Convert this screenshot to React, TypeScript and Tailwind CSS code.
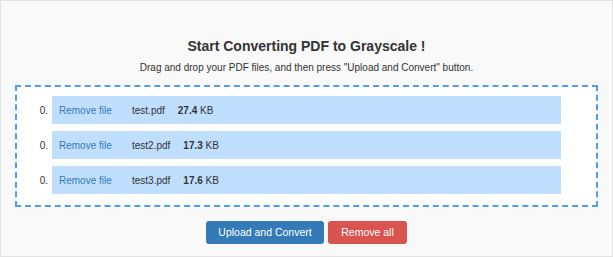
const files = [
  { name: "test.pdf", size: "27.4" },
  { name: "test2.pdf", size: "17.3" },
  { name: "test3.pdf", size: "17.6" },
];

export default function App() {
  return (
    <div
      className="w-[613px] h-[257px] bg-[#f9f9f9] border border-[#e3e3e3] text-[#333] flex flex-col items-center"
      style={{ fontFamily: '"Liberation Sans", Arial, sans-serif' }}
    >
      <h1 className="mt-[36px] text-[14px] font-bold leading-[18px]">
        Start Converting PDF to Grayscale !
      </h1>
      <p className="mt-[7px] text-[10px] leading-[12px]">
        Drag and drop your PDF files, and then press "Upload and Convert" button.
      </p>

      {/* drop zone */}
      <div className="mt-[11px] w-[583px] h-[122px] self-start ml-[14px] border-2 border-dashed border-[#4d9ef0] bg-white pt-[9px] flex flex-col gap-[7px]">
        {files.map((f) => (
          <div key={f.name} className="flex items-center">
            <span className="w-[35px] text-right pr-[4px] text-[10px]">0.</span>
            <div className="w-[509px] h-[28px] bg-[#c0dffe] flex items-center text-[10px] pl-[7px]">
              <span className="text-[#337ab7] w-[73px]">Remove file</span>
              <span>{f.name}</span>
              <span className="ml-[13px]">
                <b>{f.size}</b> KB
              </span>
            </div>
          </div>
        ))}
      </div>

      <div className="mt-[14px] flex gap-[4px]">
        <button className="w-[118px] h-[23px] rounded-[3px] bg-[#337ab7] text-white text-[10.5px]">
          Upload and Convert
        </button>
        <button className="w-[79px] h-[23px] rounded-[3px] bg-[#d9534f] text-white text-[10.5px]">
          Remove all
        </button>
      </div>
    </div>
  );
}
